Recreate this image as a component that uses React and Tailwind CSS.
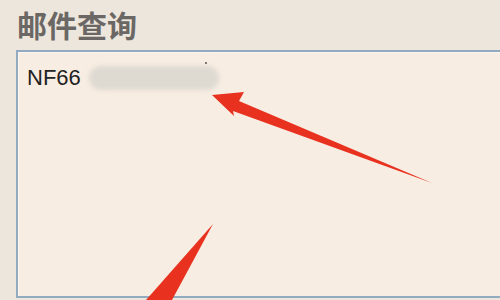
import React from "react";

export default function App() {
  return (
    <div className="relative w-[500px] h-[300px] overflow-hidden bg-[#ede6dd]" style={{ fontFamily: '"Liberation Sans", "Noto Sans CJK SC", sans-serif' }}>
      <div className="pl-[17px] pt-[5px] h-[50px]">
        <h1 className="text-[30px] leading-[38px] font-bold text-[#6b6764] tracking-[0px]" style={{ fontFamily: '"Noto Sans CJK SC", sans-serif' }}>
          邮件查询
        </h1>
      </div>
      <div className="ml-[16px] w-[500px] h-[248px] border-2 border-[#93abc1] bg-[#f8ede3] shadow-[inset_1px_1px_0_#fbf6f0]">
        <div className="flex items-center pl-[9px] pt-[12px] h-[40px]">
          <span className="text-[22px] leading-[26px] text-[#222222]">NF66</span>
          <div className="relative ml-[8px] h-[24px] w-[130px] rounded-[12px] bg-[#dedad2] blur-[2px]"></div>
        </div>
      </div>
      <svg className="absolute inset-0 pointer-events-none" width="500" height="300" viewBox="0 0 500 300">
        <circle cx="206" cy="63" r="1" fill="#555" />
        <polygon points="212,95 244,92 239,101 432,183 233,111 234,116" fill="#e8321f" />
        <polygon points="213,224 172,300 146,300" fill="#e8321f" />
      </svg>
    </div>
  );
}
